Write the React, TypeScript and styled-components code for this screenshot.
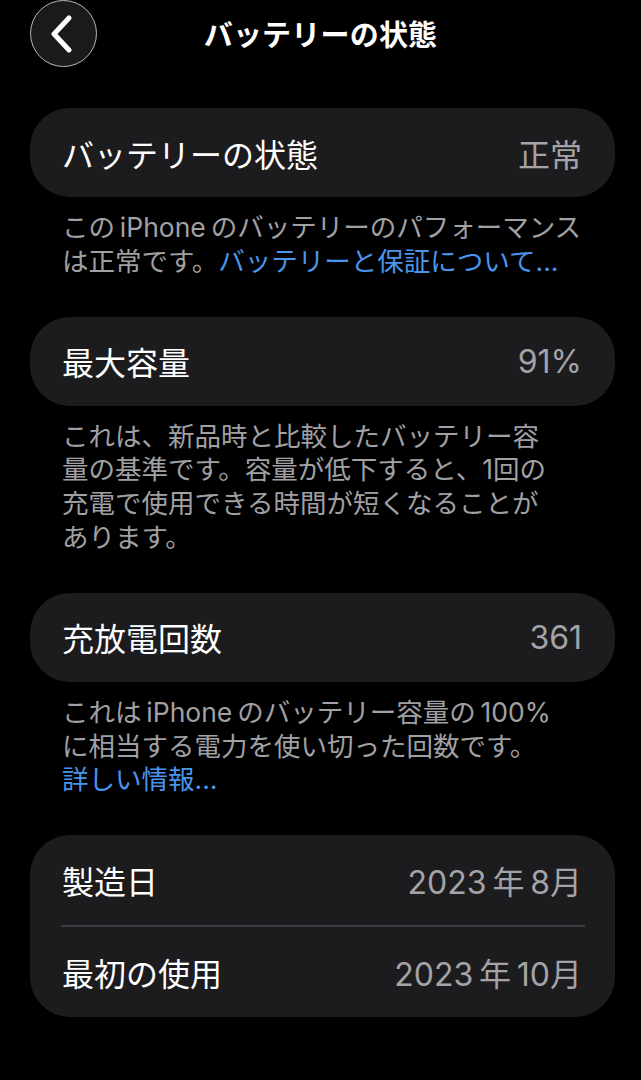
import React from 'react'
import styled, { createGlobalStyle } from 'styled-components'

const GlobalStyle = createGlobalStyle`
    html, body {
        margin: 0;
        padding: 0;
        background: #000000;
    }
    body {
        font-family: "Inter", "Noto Sans CJK JP", sans-serif;
        color: #ffffff;
        -webkit-font-smoothing: antialiased;
    }
`

const Page = styled.div`
    width: 641px;
    min-height: 1080px;
    background: #000000;
`

const Header = styled.header`
    position: relative;
    height: 66px;
    display: flex;
    align-items: center;
    justify-content: center;
`

const BackButton = styled.button`
    position: absolute;
    left: 30px;
    top: 0;
    width: 67px;
    height: 67px;
    box-sizing: border-box;
    border-radius: 50%;
    border: 1.5px solid #b8b8bc;
    background: #1a1a1c;
    display: flex;
    align-items: center;
    justify-content: center;
    padding: 0 4px 0 0;
    cursor: pointer;
`

const Title = styled.h1`
    margin: 0;
    font-size: 29px;
    font-weight: 700;
    letter-spacing: 0.2px;
    color: #ffffff;
`

const Content = styled.main`
    padding: 42px 26px 0 30px;
    display: flex;
    flex-direction: column;
`

const Card = styled.section`
    background: #1c1c1e;
    border-radius: 40px;
    display: flex;
    flex-direction: column;
`

const Row = styled.div<{ $height?: number }>`
    height: ${p => p.$height ?? 89}px;
    display: flex;
    align-items: center;
    justify-content: space-between;
    padding: 0 33px 0 32px;
    font-size: 32px;
`

const Label = styled.span`
    color: #ffffff;
`

const Value = styled.span`
    color: #a3a3a8;
`

const Divider = styled.div`
    height: 1.5px;
    background: #3e3e42;
    margin: 0 30px 0 31px;
`

const Note = styled.p`
    margin: 14px 0 38px 32px;
    font-size: 26.5px;
    line-height: 33.8px;
    color: #a0a0a5;
    white-space: nowrap;
`

const Link = styled.a`
    color: #4a95ec;
    text-decoration: none;
`

const ChevronLeft = () => (
    <svg width="24" height="38" viewBox="0 0 24 38" fill="none">
        <path d="M19 3 L4 19 L19 35" stroke="#ffffff" strokeWidth="5" strokeLinecap="round" strokeLinejoin="round" />
    </svg>
)

export default function App() {
    return (
        <Page>
            <GlobalStyle />
            <Header>
                <BackButton aria-label="戻る">
                    <ChevronLeft />
                </BackButton>
                <Title>バッテリーの状態</Title>
            </Header>
            <Content>
                <Card>
                    <Row>
                        <Label>バッテリーの状態</Label>
                        <Value>正常</Value>
                    </Row>
                </Card>
                <Note>
                    この&#8201;iPhone&#8201;のバッテリーのパフォーマンス<br />
                    は正常です。<Link href="#">バッテリーと保証について...</Link>
                </Note>

                <Card>
                    <Row>
                        <Label>最大容量</Label>
                        <Value>91%</Value>
                    </Row>
                </Card>
                <Note>
                    これは、新品時と比較したバッテリー容<br />
                    量の基準です。容量が低下すると、1回の<br />
                    充電で使用できる時間が短くなることが<br />
                    あります。
                </Note>

                <Card>
                    <Row>
                        <Label>充放電回数</Label>
                        <Value>361</Value>
                    </Row>
                </Card>
                <Note>
                    これは&#8201;iPhone&#8201;のバッテリー容量の&#8201;100%<br />
                    に相当する電力を使い切った回数です。<br />
                    <Link href="#">詳しい情報...</Link>
                </Note>

                <Card>
                    <Row $height={90}>
                        <Label>製造日</Label>
                        <Value>2023&#8201;年&#8201;8月</Value>
                    </Row>
                    <Divider />
                    <Row $height={90}>
                        <Label>最初の使用</Label>
                        <Value>2023&#8201;年&#8201;10月</Value>
                    </Row>
                </Card>
            </Content>
        </Page>
    )
}
